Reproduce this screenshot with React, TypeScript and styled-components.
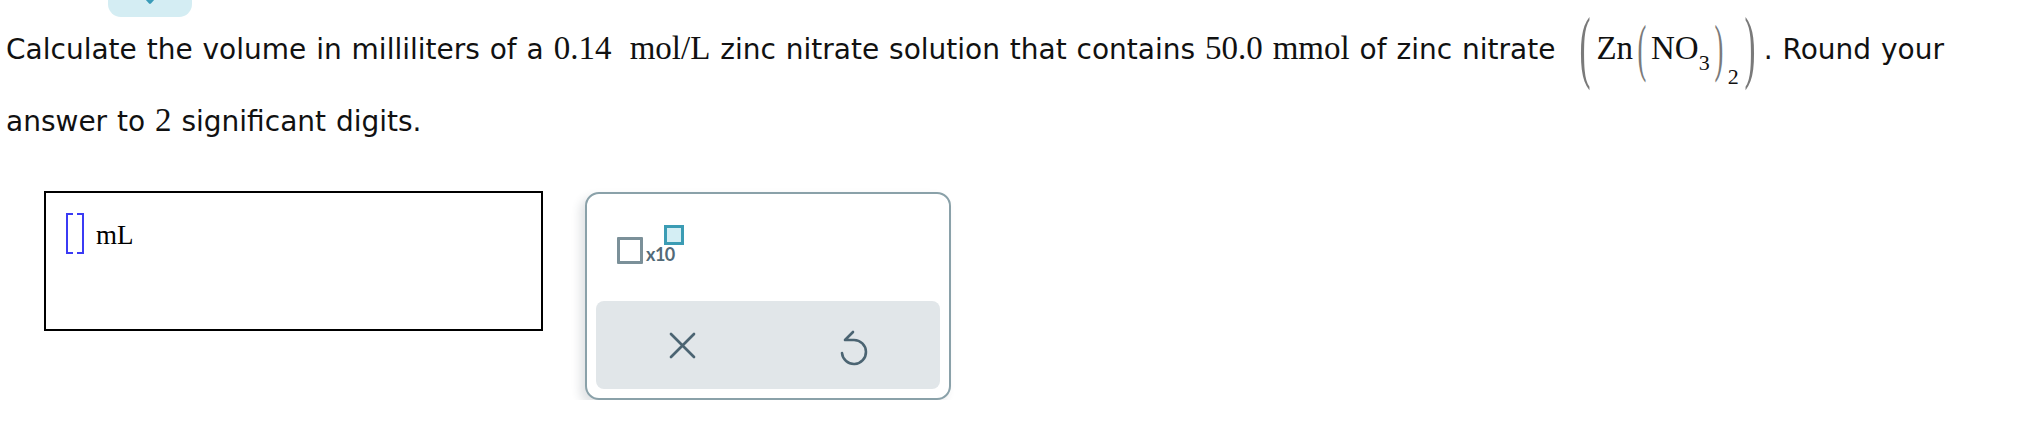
import React from "react";
import styled, { createGlobalStyle } from "styled-components";

const GlobalStyle = createGlobalStyle`
  html, body {
    margin: 0;
    padding: 0;
    background: #ffffff;
  }
`;

const Page = styled.div`
  padding: 0 6px;
  font-family: "DejaVu Sans", Verdana, sans-serif;
  color: #111111;
`;

const TopTab = styled.div`
  width: 84px;
  height: 17px;
  margin-left: 102px;
  background-color: #d4edf3;
  border-radius: 0 0 13px 13px;
  display: flex;
  justify-content: center;
  align-items: flex-start;
  overflow: hidden;
`;

const Question = styled.p`
  margin: -4px 0 0 0;
  font-size: 28px;
  line-height: 71px;
  word-spacing: 1px;
  white-space: nowrap;
`;

const MathText = styled.span<{ $gap?: number }>`
  font-family: "Liberation Serif", "Times New Roman", serif;
  font-size: 33px;
  word-spacing: 0;
  margin-left: ${({ $gap }) => ($gap ? `${$gap}px` : "0")};
`;

const Formula = styled.span`
  font-family: "Liberation Serif", "Times New Roman", serif;
  font-size: 33px;
  margin-left: 19px;
  margin-right: 3px;
`;

const Paren = styled.span<{ $size: number; $scale: number; $shift: number }>`
  display: inline-block;
  font-size: ${({ $size }) => $size}px;
  line-height: 40px;
  color: #7a7a7a;
  transform: translateY(${({ $shift }) => $shift}px)
    scale(0.55, ${({ $scale }) => $scale});
  margin: 0 1px;
`;

const Sub = styled.span<{ $drop: number }>`
  font-size: 22px;
  line-height: 0;
  vertical-align: ${({ $drop }) => -$drop}px;
`;

const AnswerRow = styled.div`
  display: flex;
  align-items: flex-start;
  gap: 42px;
  margin-top: 34px;
  padding-left: 38px;
`;

const AnswerBox = styled.div`
  box-sizing: border-box;
  width: 499px;
  height: 140px;
  border: 2px solid #000000;
  padding: 20px;
  display: flex;
  align-items: flex-start;
`;

const InputLine = styled.div`
  display: flex;
  align-items: center;
  gap: 12px;
`;

const Bracket = styled.span`
  box-sizing: border-box;
  display: inline-block;
  width: 18px;
  height: 41px;
  border-left: 2px solid #3b3bf4;
  border-right: 2px solid #3b3bf4;
  background:
    linear-gradient(to right, #3b3bf4 0 35%, transparent 35% 65%, #3b3bf4 65%)
      top / 100% 2px no-repeat,
    linear-gradient(to right, #3b3bf4 0 35%, transparent 35% 65%, #3b3bf4 65%)
      bottom / 100% 2px no-repeat;
`;

const Unit = styled.span`
  font-family: "Liberation Serif", "Times New Roman", serif;
  font-size: 27px;
  color: #000000;
  margin-top: 4px;
`;

const Keypad = styled.div`
  box-sizing: border-box;
  width: 366px;
  height: 208px;
  margin-top: 1px;
  border: 2px solid #8aa1a9;
  border-radius: 14px;
  padding: 9px;
  display: flex;
  flex-direction: column;
  justify-content: space-between;
  background: #ffffff;
  box-shadow: -5px 5px 10px rgba(40, 60, 70, 0.14);
`;

const SciButton = styled.div`
  display: grid;
  grid-template-columns: 26px auto;
  grid-template-rows: 12px 27px;
  margin: 22px 0 0 21px;
  width: 70px;
`;

const BaseBox = styled.span`
  grid-column: 1;
  grid-row: 2;
  box-sizing: border-box;
  width: 26px;
  height: 27px;
  border: 3px solid #7b9099;
  border-radius: 1px;
`;

const ExpBox = styled.span`
  grid-column: 2;
  grid-row: 1 / 3;
  align-self: start;
  box-sizing: border-box;
  width: 20px;
  height: 20px;
  margin-left: 21px;
  border: 3px solid #3b9cb4;
  background-color: #d4eef4;
`;

const TimesTen = styled.span`
  grid-column: 2;
  grid-row: 2;
  align-self: end;
  margin-left: 3px;
  font-family: "Lato", "Open Sans", sans-serif;
  font-size: 18px;
  font-weight: 700;
  letter-spacing: -0.5px;
  line-height: 1;
  color: #526a78;
  margin-bottom: 1px;
`;

const ActionBar = styled.div`
  height: 88px;
  border-radius: 8px;
  background-color: #e1e6e9;
  display: grid;
  grid-template-columns: 1fr 1fr;
`;

const ActionButton = styled.button`
  border: 0;
  background: transparent;
  display: flex;
  align-items: center;
  justify-content: center;
  cursor: pointer;
  padding: 0;
  color: #4b6472;
`;

const ChevronTip = () => (
  <svg width="14" height="5" viewBox="0 0 14 5">
    <path
      d="M1 -4 L7 2.5 L13 -4"
      fill="none"
      stroke="#3a9bb8"
      strokeWidth="2.6"
      strokeLinecap="round"
      strokeLinejoin="round"
    />
  </svg>
);

const CloseIcon = () => (
  <svg width="27" height="27" viewBox="0 0 27 27">
    <path
      d="M2 2 L25 25 M25 2 L2 25"
      fill="none"
      stroke="currentColor"
      strokeWidth="2.7"
      strokeLinecap="round"
    />
  </svg>
);

const UndoIcon = () => (
  <svg width="28" height="36" viewBox="0 0 28 36" style={{ marginTop: 6 }}>
    <path
      d="M13 2 L5 10 L14 10 A12 12 0 1 1 2 23"
      fill="none"
      stroke="currentColor"
      strokeWidth="2.6"
      strokeLinecap="round"
      strokeLinejoin="round"
    />
  </svg>
);

export default function App() {
  return (
    <>
      <GlobalStyle />
      <Page>
        <TopTab>
          <ChevronTip />
        </TopTab>
        <Question>
          Calculate the volume in milliliters of a <MathText>0.14</MathText>
          <MathText $gap={10}> mol/L</MathText> zinc nitrate solution that
          contains <MathText>50.0</MathText> <MathText>mmol</MathText> of zinc
          nitrate
          <Formula>
            <Paren $size={60} $scale={1.33} $shift={7}>(</Paren>
            Zn
            <Paren $size={48} $scale={1.34} $shift={5}>(</Paren>
            NO
            <Sub $drop={11}>3</Sub>
            <Paren $size={48} $scale={1.34} $shift={5}>)</Paren>
            <Sub $drop={25}>2</Sub>
            <Paren $size={60} $scale={1.33} $shift={7}>)</Paren>
          </Formula>
          . Round your
          <br />
          answer to <MathText>2</MathText> significant digits.
        </Question>
        <AnswerRow>
          <AnswerBox>
            <InputLine>
              <Bracket />
              <Unit>mL</Unit>
            </InputLine>
          </AnswerBox>
          <Keypad>
            <SciButton>
              <BaseBox />
              <ExpBox />
              <TimesTen>x10</TimesTen>
            </SciButton>
            <ActionBar>
              <ActionButton aria-label="clear">
                <CloseIcon />
              </ActionButton>
              <ActionButton aria-label="undo">
                <UndoIcon />
              </ActionButton>
            </ActionBar>
          </Keypad>
        </AnswerRow>
      </Page>
    </>
  );
}
